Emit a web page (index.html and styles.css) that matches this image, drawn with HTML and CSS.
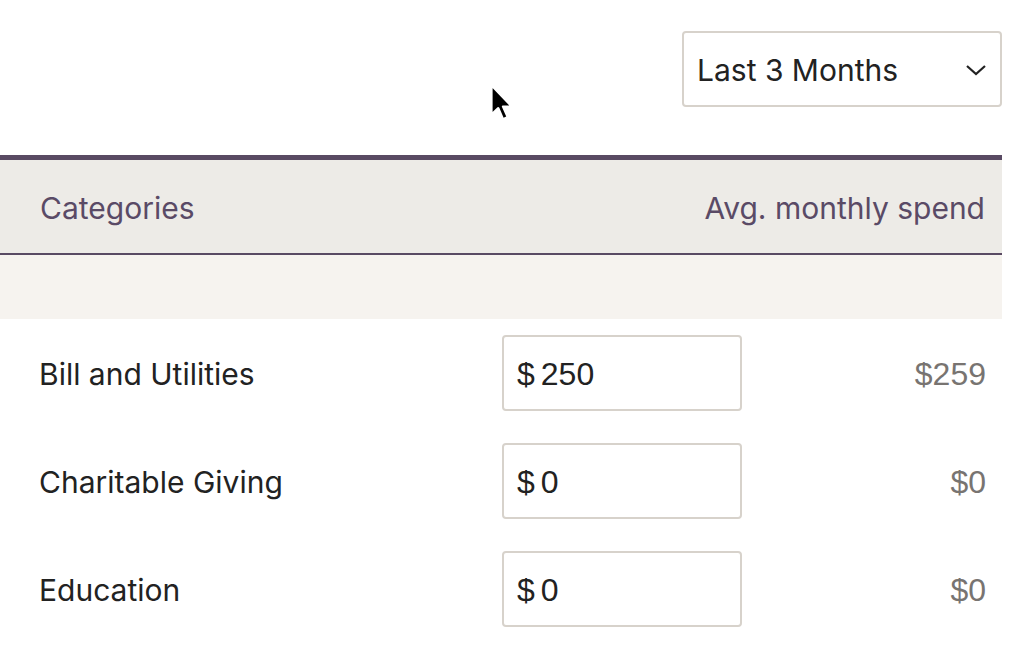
FILE: index.html
```html
<!DOCTYPE html>
<html>
<head>
<meta charset="utf-8">
<link rel="stylesheet" href="styles.css">
</head>
<body>
<div class="page">
  <div class="toolbar">
    <div class="select">
      <span class="select-text">Last 3 Months</span>
      <svg class="chev" width="22" height="14" viewBox="0 0 22 14"><path d="M2 3 L11 11 L20 3" fill="none" stroke="#222" stroke-width="2.2"/></svg>
    </div>
  </div>
  <div class="table">
    <div class="thead">
      <span>Categories</span>
      <span>Avg. monthly spend</span>
    </div>
    <div class="band"></div>
    <div class="row">
      <div class="label">Bill and Utilities</div>
      <div class="input"><span class="cur">$</span><span>250</span></div>
      <div class="avg">$259</div>
    </div>
    <div class="row">
      <div class="label">Charitable Giving</div>
      <div class="input"><span class="cur">$</span><span>0</span></div>
      <div class="avg">$0</div>
    </div>
    <div class="row">
      <div class="label">Education</div>
      <div class="input"><span class="cur">$</span><span>0</span></div>
      <div class="avg">$0</div>
    </div>
  </div>
</div>
<svg class="cursor" width="28" height="42" viewBox="0 0 26 40"><path d="M2 2 L2 30 L8.5 24 L13 34.5 L17.5 32.5 L13 22.5 L21.5 22.5 Z" fill="#000" stroke="#fff" stroke-width="2.2" stroke-linejoin="round"/></svg>
</body>
</html>
```
FILE: styles.css
```css
html, body {
  margin: 0;
  padding: 0;
  background: #fff;
}
body {
  font-family: Inter, "Liberation Sans", sans-serif;
  color: #222;
  position: relative;
  width: 1032px;
  height: 654px;
  overflow: hidden;
}
.page {
  width: 1002px;
  padding-top: 31px;
}
.toolbar {
  display: flex;
  justify-content: flex-end;
  margin-bottom: 48px;
}
.select {
  box-sizing: border-box;
  width: 320px;
  height: 76px;
  border: 2px solid #d7d2cb;
  border-radius: 4px;
  display: flex;
  align-items: center;
  justify-content: space-between;
  padding: 0 13px 0 13px;
  font-size: 30px;
  color: #222;
}
.select-text {
  padding-top: 2px;
}
.chev {
  margin-top: 2px;
}
.table {
  border-top: 5px solid #594a63;
}
.thead {
  box-sizing: border-box;
  height: 95px;
  background: #edebe7;
  border-bottom: 2px solid #594a63;
  display: flex;
  align-items: center;
  justify-content: space-between;
  padding: 2px 17px 0 40px;
  font-size: 30px;
  color: #5a4a66;
}
.band {
  height: 64px;
  background: #f6f3ef;
}
.row {
  display: grid;
  grid-template-columns: 463px 240px 1fr;
  align-items: center;
  height: 108px;
  padding: 0 16px 0 39px;
  box-sizing: border-box;
}
.label {
  font-size: 30px;
  color: #222;
  padding-top: 2px;
}
.input {
  box-sizing: border-box;
  height: 76px;
  border: 2px solid #d7d2cb;
  border-radius: 4px;
  display: flex;
  align-items: center;
  padding: 2px 0 0 13px;
  gap: 6px;
  font-family: "Liberation Sans", Arial, sans-serif;
  font-size: 32px;
  color: #222;
}
.avg {
  text-align: right;
  font-family: "Liberation Sans", Arial, sans-serif;
  font-size: 32px;
  color: #787471;
  padding-top: 2px;
}
.cursor {
  position: absolute;
  left: 489px;
  top: 83px;
}
```
